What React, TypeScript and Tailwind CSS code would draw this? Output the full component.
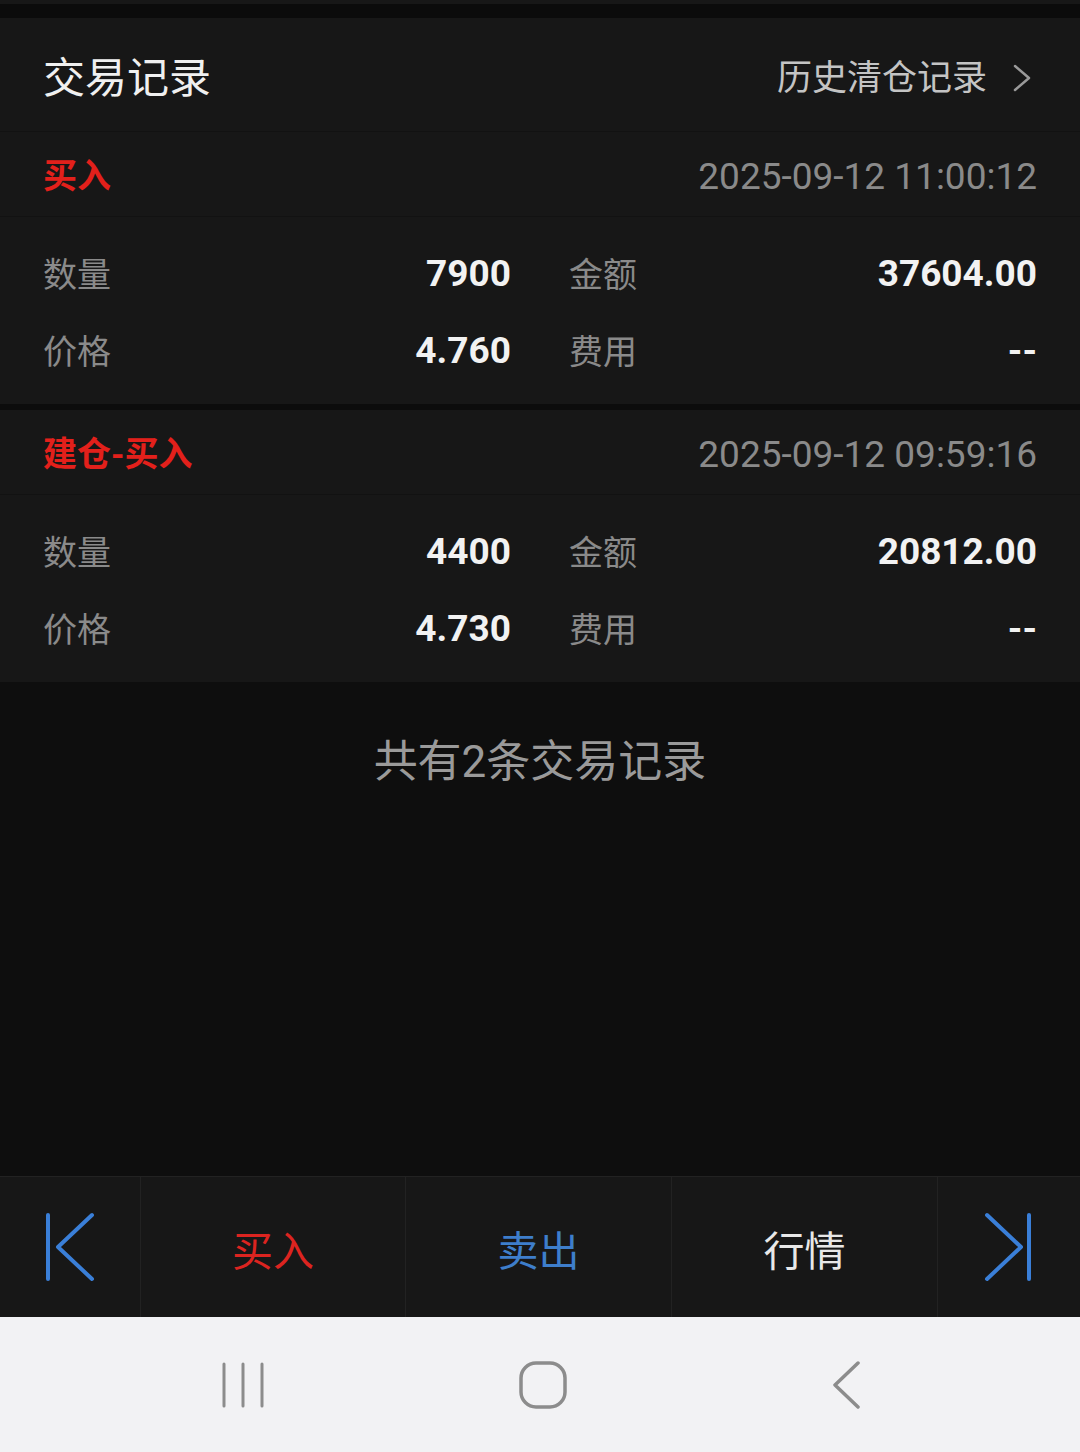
import React from "react";

const font = "font-['Roboto','Noto_Sans_CJK_SC',sans-serif]";

const Row = ({
  l1,
  v1,
  l2,
  v2,
}: {
  l1: string;
  v1: string;
  l2: string;
  v2: string;
}) => (
  <div className="flex items-center h-[77px] px-[43px]">
    <div className="w-[468px] flex items-center justify-between">
      <span className="text-[34px] text-[#8a8a8a]">{l1}</span>
      <span className="text-[37px] font-bold text-[#f2f2f2] -mt-[3px]">{v1}</span>
    </div>
    <div className="flex-1 flex items-center justify-between pl-[58px]">
      <span className="text-[34px] text-[#8a8a8a]">{l2}</span>
      <span className="text-[37px] font-bold text-[#f2f2f2] -mt-[3px]">{v2}</span>
    </div>
  </div>
);

const Record = ({
  type,
  time,
  qty,
  amount,
  price,
}: {
  type: string;
  time: string;
  qty: string;
  amount: string;
  price: string;
}) => (
  <div className="bg-[#171717]">
    <div className="h-[85px] flex items-center justify-between px-[43px] pt-[5px] border-b border-[#121212]">
      <span className="text-[34px] font-bold text-[#e3201b]">{type}</span>
      <span className="text-[37px] text-[#8a8a8a]">{time}</span>
    </div>
    <div className="pt-5 pb-[13px]">
      <Row l1="数量" v1={qty} l2="金额" v2={amount} />
      <Row l1="价格" v1={price} l2="费用" v2="--" />
    </div>
  </div>
);

export default function App() {
  return (
    <div className={`w-[1080px] h-[1452px] flex flex-col bg-[#0d0d0d] ${font}`}>
      <div className="h-1 bg-[#171717]" />
      <div className="h-[14px] bg-[#0b0b0b]" />
      <div className="h-[114px] bg-[#171717] border-b border-[#121212] flex items-center justify-between pl-[43px] pr-[48px] pt-[8px]">
        <span className="text-[42px] text-[#f0f0f0]">交易记录</span>
        <div className="flex items-center gap-[25px] mt-[2px]">
          <span className="text-[35px] text-[#c4c4c4]">历史清仓记录</span>
          <svg className="-mt-[4px]" width="20" height="28" viewBox="0 0 20 28" fill="none">
            <path d="M3 2 L17 14 L3 26" stroke="#9a9a9a" strokeWidth="2.5" strokeLinecap="round" strokeLinejoin="round" />
          </svg>
        </div>
      </div>

      <Record type="买入" time="2025-09-12 11:00:12" qty="7900" amount="37604.00" price="4.760" />
      <div className="h-[6px] bg-[#0c0c0c]" />
      <Record type="建仓-买入" time="2025-09-12 09:59:16" qty="4400" amount="20812.00" price="4.730" />

      <div className="flex-1 bg-[#0e0e0e] flex justify-center pt-[52px]">
        <span className="text-[44px] leading-[56px] h-[56px] text-[#9a9a9a]">共有2条交易记录</span>
      </div>

      <div className="h-[141px] bg-[#171717] border-t border-[#222] flex">
        <div className="w-[141px] flex items-center justify-center border-r border-[#222]">
          <svg width="52" height="70" viewBox="0 0 52 70" fill="none">
            <path d="M4 3 V67" stroke="#3a7fd8" strokeWidth="4" strokeLinecap="round" />
            <path d="M48 3 L14 35 L48 67" stroke="#3a7fd8" strokeWidth="4" strokeLinecap="round" strokeLinejoin="round" />
          </svg>
        </div>
        <div className="w-[265px] flex items-center justify-center border-r border-[#222] pt-[12px]">
          <span className="text-[41px] text-[#dc2420]">买入</span>
        </div>
        <div className="w-[266px] flex items-center justify-center border-r border-[#222] pt-[12px]">
          <span className="text-[41px] text-[#3e7ecb]">卖出</span>
        </div>
        <div className="w-[266px] flex items-center justify-center border-r border-[#222] pt-[12px]">
          <span className="text-[41px] text-[#e8e8e8]">行情</span>
        </div>
        <div className="flex-1 flex items-center justify-center">
          <svg width="52" height="70" viewBox="0 0 52 70" fill="none">
            <path d="M46 3 V67" stroke="#3a7fd8" strokeWidth="4" strokeLinecap="round" />
            <path d="M4 3 L38 35 L4 67" stroke="#3a7fd8" strokeWidth="4" strokeLinecap="round" strokeLinejoin="round" />
          </svg>
        </div>
      </div>

      <div className="h-[135px] bg-[#f2f2f4] flex items-center pl-[221px]">
        <svg width="44" height="46" viewBox="0 0 44 46" fill="none">
          <path d="M3 2 V44 M22 2 V44 M41 2 V44" stroke="#8c8c8c" strokeWidth="3" strokeLinecap="round" />
        </svg>
        <svg className="ml-[254px]" width="48" height="48" viewBox="0 0 48 48" fill="none">
          <rect x="2" y="2" width="44" height="44" rx="15" stroke="#8c8c8c" strokeWidth="3.5" />
        </svg>
        <svg className="ml-[264px]" width="30" height="48" viewBox="0 0 30 48" fill="none">
          <path d="M27 2 L4 24 L27 46" stroke="#8c8c8c" strokeWidth="3.5" strokeLinecap="round" strokeLinejoin="round" />
        </svg>
      </div>
    </div>
  );
}
